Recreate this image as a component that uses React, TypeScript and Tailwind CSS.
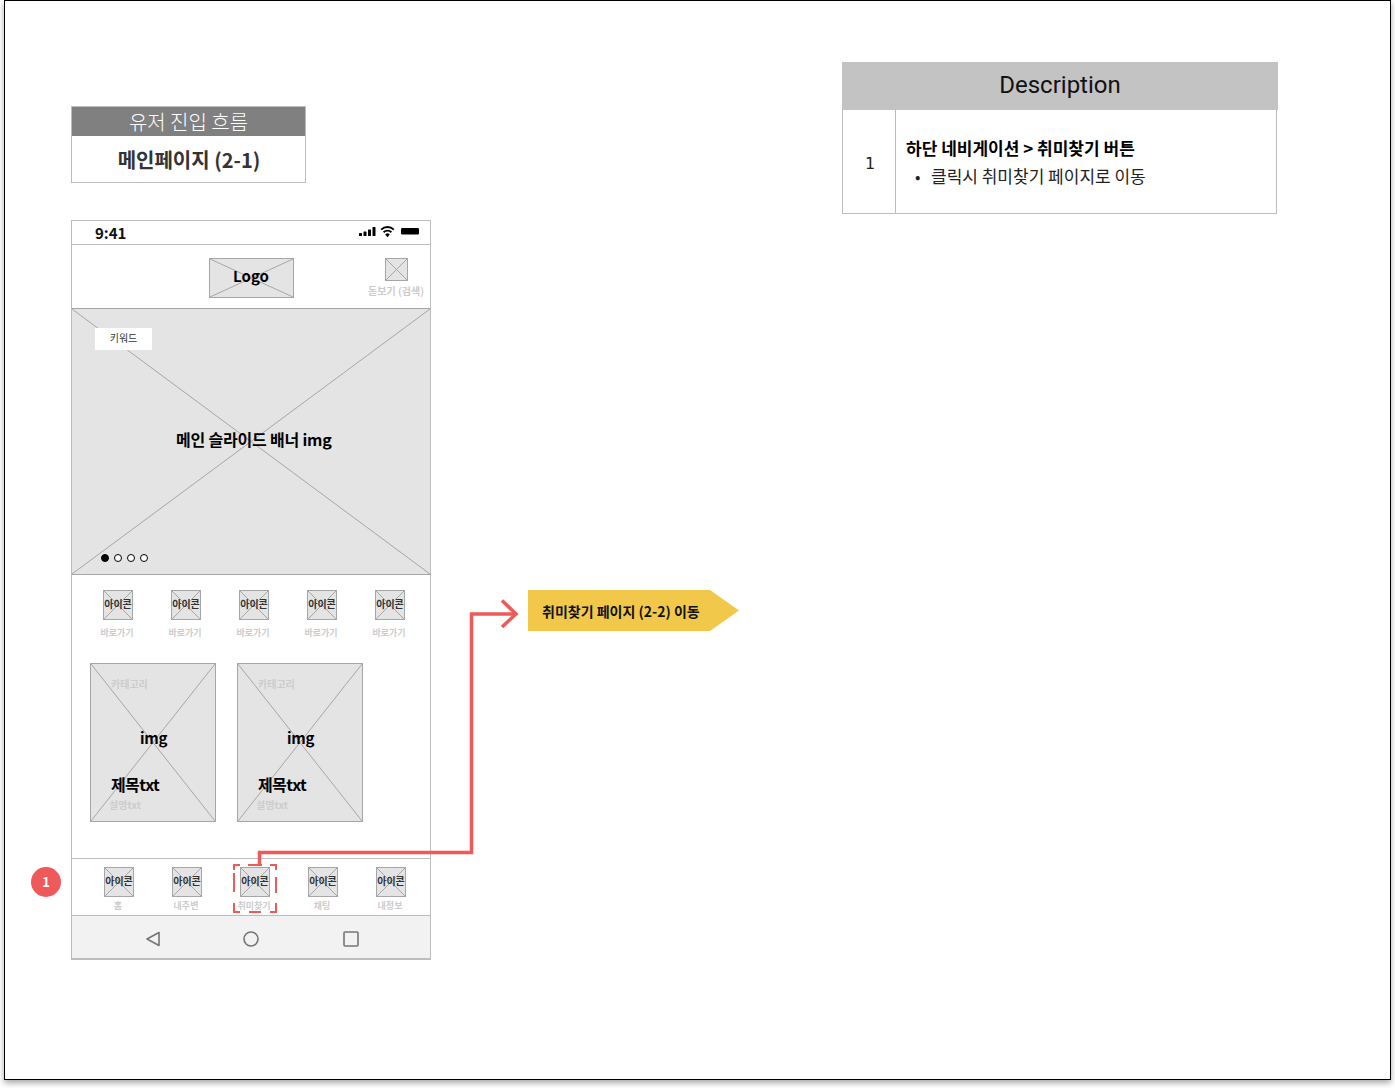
const kr = "font-['Noto_Sans_CJK_KR',sans-serif]";

// grey box with a cross through it, the wireframe image placeholder
const Placeholder = ({ className, children }: { className: string; children?: React.ReactNode }) => {
  return (
    <div className={`relative shrink-0 border border-[#a6a6a6] bg-[#e4e4e4] ${className}`}>
      <svg className="absolute inset-0 h-full w-full" viewBox="0 0 100 100" preserveAspectRatio="none">
        <line x1="0" y1="0" x2="100" y2="100" stroke="#a6a6a6" strokeWidth="1" vectorEffect="non-scaling-stroke" />
        <line x1="100" y1="0" x2="0" y2="100" stroke="#a6a6a6" strokeWidth="1" vectorEffect="non-scaling-stroke" />
      </svg>
      {children}
    </div>
  );
};

const IconItem = ({ label, top }: { label: string; top: string }) => {
  return (
    <div className="flex w-[68px] flex-col items-center">
      <Placeholder className="flex h-[30px] w-[30px] items-center justify-center">
        <span className="relative whitespace-nowrap text-[10px] leading-none font-bold text-[#333333] mt-[-2px]">아이콘</span>
      </Placeholder>
      <span className={`ml-[-2px] whitespace-nowrap text-[9px] leading-none font-bold text-[#cccccc] ${top}`}>{label}</span>
    </div>
  );
};

const Card = () => {
  return (
    <Placeholder className="h-[159px] w-[126px]">
      <div className="relative flex h-full flex-col pl-[20px]">
        <span className="mt-[13px] text-[10px] leading-[14px] font-bold text-[#cccccc]">카테고리</span>
        <span className="mt-[37px] ml-[29px] text-[15px] leading-[20px] font-bold tracking-[-0.2px] text-black">img</span>
        <span className="mt-[25px] text-[16px] leading-[22px] font-bold tracking-[-0.6px] text-black">제목txt</span>
        <span className="mt-[3px] ml-[-2px] text-[10px] leading-[14px] font-bold text-[#cccccc]">설명txt</span>
      </div>
    </Placeholder>
  );
};

const Phone = () => {
  return (
    <div className="flex h-[740px] w-[360px] flex-col border border-[#bdbdbd] border-b-2 bg-white">
      {/* status bar */}
      <div className="flex h-[24px] shrink-0 items-center justify-between border-b border-[#bdbdbd] pl-[23px] pr-[11px]">
        <span className="text-[15px] leading-none font-bold text-[#111111] mt-[-1px]">9:41</span>
        <svg width="60" height="12" viewBox="0 0 60 12" className="mt-[-2px]">
          <rect x="0" y="7" width="3" height="3" rx="0.5" fill="#000" />
          <rect x="4.5" y="5.5" width="3" height="4.5" rx="0.5" fill="#000" />
          <rect x="9" y="3.5" width="3" height="6.5" rx="0.5" fill="#000" />
          <rect x="13.5" y="1" width="3" height="9" rx="0.5" fill="#000" />
          <path d="M22.2 3.6a9 9 0 0 1 12.6 0M24.6 6.2a5.6 5.6 0 0 1 7.8 0" fill="none" stroke="#000" strokeWidth="1.9" />
          <path d="M26.2 8.4a3.2 3.2 0 0 1 4.6 0L28.5 11.2z" fill="#000" />
          <rect x="42" y="2" width="18" height="6.5" rx="1.2" fill="#000" />
        </svg>
      </div>

      {/* header */}
      <div className="relative flex h-[64px] shrink-0 items-start border-b border-[#a6a6a6] pt-[13px]">
        <Placeholder className="ml-[137px] flex h-[40px] w-[85px] items-center justify-center">
          <span className="relative mr-[1px] text-[15px] leading-none font-bold text-black mt-[-5px]">Logo</span>
        </Placeholder>
        <div className="ml-[74px] flex w-[56px] flex-col items-center">
          <Placeholder className="h-[23px] w-[23px]" />
          <span className="mt-[3px] whitespace-nowrap text-[10px] leading-[14px] font-bold text-[#cccccc]">돋보기 (검색)</span>
        </div>
      </div>

      {/* banner */}
      <Placeholder className="h-[266px] w-full border-x-0 border-t-0">
        <div className="relative flex h-full flex-col pl-[23px] pt-[19px]">
          <div className="flex h-[22px] w-[57px] items-center justify-center bg-white pb-[2px] text-[10px] leading-none text-[#333333]">키워드</div>
          <span className="mt-[77px] ml-[81px] text-[16px] leading-[24px] font-bold tracking-[-0.2px] whitespace-nowrap text-black">메인 슬라이드 배너 img</span>
          <div className="mt-[103px] ml-[6px] flex gap-[5px]">
            <span className="h-[8px] w-[8px] rounded-full border border-black bg-black" />
            <span className="h-[8px] w-[8px] rounded-full border border-black bg-white" />
            <span className="h-[8px] w-[8px] rounded-full border border-black bg-white" />
            <span className="h-[8px] w-[8px] rounded-full border border-black bg-white" />
          </div>
        </div>
      </Placeholder>

      {/* shortcuts */}
      <div className="flex shrink-0 pl-[12px] pt-[15px]">
        <IconItem label="바로가기" top="mt-[8px]" />
        <IconItem label="바로가기" top="mt-[8px]" />
        <IconItem label="바로가기" top="mt-[8px]" />
        <IconItem label="바로가기" top="mt-[8px]" />
        <IconItem label="바로가기" top="mt-[8px]" />
      </div>

      {/* cards */}
      <div className="flex shrink-0 gap-[21px] pl-[18px] pt-[26px]">
        <Card />
        <Card />
      </div>

      {/* tab bar */}
      <div className="mt-[36px] flex h-[57px] shrink-0 border-t border-[#bdbdbd] pl-[13px] pt-[8px]">
        <IconItem label="홈" top="mt-[4px]" />
        <IconItem label="내주변" top="mt-[4px]" />
        <IconItem label="취미찾기" top="mt-[4px]" />
        <IconItem label="채팅" top="mt-[4px]" />
        <IconItem label="내정보" top="mt-[4px]" />
      </div>

      {/* android nav */}
      <div className="flex grow items-center border-t border-[#bdbdbd] bg-[#f2f2f2] pl-[73px] pt-[4px]">
        <svg width="16" height="16" viewBox="0 0 16 16" fill="none" stroke="#757575" strokeWidth="1.6">
          <path d="M14 1.5V14.5L2 8Z" strokeLinejoin="round" />
        </svg>
        <svg width="16" height="16" viewBox="0 0 16 16" fill="none" stroke="#757575" strokeWidth="1.6" className="ml-[82px]">
          <circle cx="8" cy="8" r="7" />
        </svg>
        <svg width="16" height="16" viewBox="0 0 16 16" fill="none" stroke="#757575" strokeWidth="1.6" className="ml-[84px]">
          <rect x="1" y="1" width="14" height="14" rx="1" />
        </svg>
      </div>
    </div>
  );
};

const App = () => {
  return (
    <div className={`h-[1088px] w-[1395px] bg-white ${kr}`}>
      <div className="relative ml-[4px] flex h-[1080px] w-[1387px] border border-black bg-white shadow-[0_3px_6px_rgba(0,0,0,0.35)]">
        {/* left column */}
        <div className="flex w-[769px] shrink-0 flex-col pl-[66px] pt-[105px]">
          <div className="w-[235px] border border-[#bdbdbd]">
            <div className="h-[29px] bg-[#808080] text-center text-[20px] leading-[30px] font-light text-white">유저 진입 흐름</div>
            <div className="h-[46px] pl-[1px] text-center text-[20px] leading-[47px] font-bold text-[#333333]">메인페이지 (2-1)</div>
          </div>
          <div className="mt-[37px]">
            <Phone />
          </div>
        </div>

        {/* description */}
        <div className="ml-[68px] w-[436px] pt-[61px]">
          <div className="h-[48px] bg-[#c3c3c3] text-center font-['Roboto',sans-serif] text-[24px] leading-[47px] text-[#111111]">Description</div>
          <div className="mr-[1px] flex h-[104px] border-x border-b border-[#bdbdbd]">
            <div className="flex w-[53px] items-center justify-center border-r border-[#bdbdbd] pt-[4px] pl-[2px] font-['DejaVu_Sans',sans-serif] text-[16px] text-[#222222]">1</div>
            <div className="pl-[10px] pt-[24px]">
              <p className="text-[17px] leading-[28px] font-bold text-black">하단 네비게이션 &gt; 취미찾기 버튼</p>
              <div className="flex text-[17px] leading-[28px] text-[#222222]">
                <span className="w-[25px] pl-[9px] text-[16px]">•</span>
                <span>클릭시 취미찾기 페이지로 이동</span>
              </div>
            </div>
          </div>
        </div>

        {/* annotations that sit over the wireframe */}
        <div className="absolute left-[26px] top-[866px] flex h-[30px] w-[30px] items-center justify-center rounded-full bg-[#ee5a5a] text-[13px] font-bold text-white">1</div>
        <svg className="absolute left-[228px] top-[863px]" width="44" height="49" fill="none" stroke="#ee5a5a" strokeWidth="2">
          <path d="M1 6V1H7M37 1H43V6M43 39V48H37M7 48H1V39M1 9V28M43 13V29M16 48H28M15 1H29" />
        </svg>
        <svg className="absolute left-[239px] top-[590px] overflow-visible" width="290" height="280" fill="none">
          <path d="M15.5 273V261.5H227.5V23H272" stroke="#ee5a5a" strokeWidth="3.5" />
          <path d="M258 9.5L272 23L258 36" stroke="#ee5a5a" strokeWidth="3.5" />
        </svg>
        <div className="absolute left-[523px] top-[589px] flex h-[41px] w-[211px] items-center bg-[#f2c84b] pl-[14px] pt-[1px] text-[14px] font-bold whitespace-nowrap text-[#111111] [clip-path:polygon(0_0,182px_0,100%_50%,182px_100%,0_100%)]">
          취미찾기 페이지 (2-2) 이동
        </div>
      </div>
    </div>
  );
};

export default App;
